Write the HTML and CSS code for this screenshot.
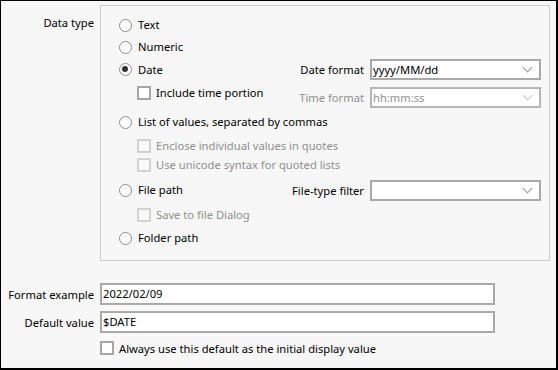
FILE: index.html
```html
<!DOCTYPE html>
<html>
<head>
<meta charset="utf-8">
<link rel="stylesheet" href="styles.css">
</head>
<body>
<div class="frame">
  <div class="top">
    <div class="side-label">Data type</div>
    <div class="panel">
      <div class="row r-text">
        <span class="opt"><span class="radio"></span>Text</span>
      </div>
      <div class="row r-num">
        <span class="opt"><span class="radio"></span>Numeric</span>
      </div>
      <div class="row r-date">
        <span class="opt"><span class="radio checked"></span>Date</span>
        <div class="field">
          <span class="flabel">Date format</span>
          <div class="combo"><span class="val">yyyy/MM/dd</span><span class="chev"></span></div>
        </div>
      </div>
      <div class="row r-incl">
        <span class="opt sub"><span class="check"></span>Include time portion</span>
        <div class="field f-time disabled">
          <span class="flabel">Time format</span>
          <div class="combo"><span class="val">hh:mm:ss</span><span class="chev"></span></div>
        </div>
      </div>
      <div class="row r-list">
        <span class="opt"><span class="radio"></span>List of values, separated by commas</span>
      </div>
      <div class="row r-enc">
        <span class="opt sub disabled"><span class="check"></span>Enclose individual values in quotes</span>
      </div>
      <div class="row r-uni">
        <span class="opt sub disabled"><span class="check"></span>Use unicode syntax for quoted lists</span>
      </div>
      <div class="row r-file">
        <span class="opt"><span class="radio"></span>File path</span>
        <div class="field">
          <span class="flabel">File-type filter</span>
          <div class="combo"><span class="val"></span><span class="chev"></span></div>
        </div>
      </div>
      <div class="row r-save">
        <span class="opt sub disabled"><span class="check"></span>Save to file Dialog</span>
      </div>
      <div class="row r-fold">
        <span class="opt"><span class="radio"></span>Folder path</span>
      </div>
    </div>
  </div>
  <div class="bottom">
    <div class="frow">
      <span class="blabel">Format example</span>
      <div class="input">2022/02/09</div>
    </div>
    <div class="frow">
      <span class="blabel">Default value</span>
      <div class="input">$DATE</div>
    </div>
    <div class="crow">
      <span class="check"></span>Always use this default as the initial display value
    </div>
  </div>
</div>
</body>
</html>
```

FILE: styles.css
```css
* { box-sizing: border-box; }
html, body { margin: 0; padding: 0; background: #f7f7f7; }
body {
  font-family: "Noto Sans", "Open Sans", sans-serif;
  font-size: 11.2px;
  color: #000;
}
.frame {
  width: 558px;
  height: 370px;
  background: #f7f7f7;
  border-style: solid;
  border-color: #000;
  border-width: 1px 2px 2px 1px;
  padding: 4px 6px 0 0;
}
.top {
  display: flex;
  align-items: flex-start;
}
.side-label {
  width: 99px;
  padding-right: 6px;
  text-align: right;
  margin-top: 9px;
  line-height: 18px;
}
.panel {
  width: 450px;
  height: 256px;
  border: 1px solid #cccccc;
  padding: 8px 8px 0 18px;
}
.row {
  display: flex;
  align-items: center;
}
.r-text, .r-num { height: 22px; }
.r-date { height: 23px; }
.r-incl { height: 27px; align-items: flex-start; }
.r-incl .opt { margin-top: 3px; }
.r-incl .field { margin-top: 6px; }
.r-list { height: 28px; }
.r-enc { height: 19px; }
.r-uni { height: 20px; }
.r-file { height: 30px; }
.r-save { height: 20px; }
.r-fold { height: 26px; }

.opt {
  display: flex;
  align-items: center;
  height: 18px;
  line-height: 18px;
  white-space: nowrap;
}
.opt.sub { margin-left: 18px; }
.disabled { color: #8f8f8f; }

.radio {
  width: 13px;
  height: 13px;
  border-radius: 50%;
  border: 1.6px solid #8e8e8e;
  background: #fff;
  margin-right: 6px;
  position: relative;
  flex: none;
}
.radio.checked::after {
  content: "";
  position: absolute;
  left: 2px;
  top: 2px;
  width: 6px;
  height: 6px;
  border-radius: 50%;
  background: #333;
}
.check {
  width: 14px;
  height: 14px;
  border: 2px solid #a6a6a6;
  background: #fff;
  margin-right: 5px;
  flex: none;
}
.disabled .check {
  border-color: #d2d2d2;
  background: #f9f9f9;
}

.field {
  margin-left: auto;
  display: flex;
  align-items: center;
}
.flabel {
  margin-right: 6px;
  white-space: nowrap;
}
.combo {
  width: 171px;
  height: 21px;
  border: 2px solid #a9a9a9;
  background: #fff;
  display: flex;
  align-items: center;
  padding-left: 1px;
}
.combo .val { flex: 1; line-height: 17px; }
.field.disabled .combo { border-color: #b6b6b6; }
.chev {
  width: 7px;
  height: 7px;
  border-right: 1px solid #9a9a9a;
  border-bottom: 1px solid #9a9a9a;
  transform: rotate(45deg);
  margin: -4px 8px 0 0;
}
.field.disabled .chev { border-color: #c4c4c4; }

.bottom {
  margin-top: 22px;
}
.frow {
  display: flex;
  align-items: center;
  margin-bottom: 6px;
}
.blabel {
  width: 99px;
  padding-right: 6px;
  text-align: right;
  white-space: nowrap;
}
.input {
  width: 395px;
  height: 22px;
  border: 2px solid #a9a9a9;
  background: #fff;
  padding-left: 1px;
  line-height: 18px;
}
.crow {
  display: flex;
  align-items: center;
  padding-left: 99px;
  margin-top: 1px;
  height: 18px;
}
```
